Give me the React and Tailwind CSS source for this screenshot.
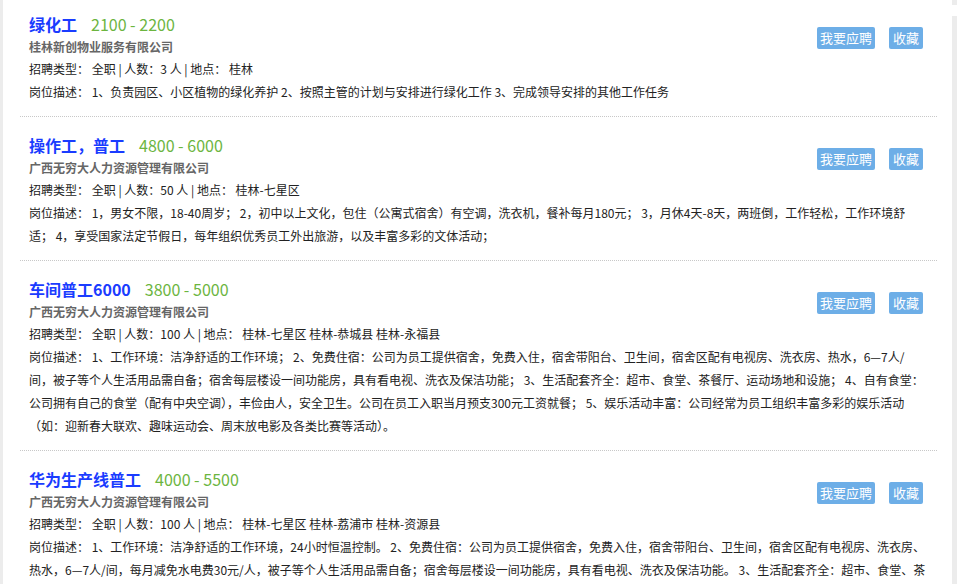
const JOBS = [
  {
    title: '绿化工',
    salary: '2100 - 2200',
    company: '桂林新创物业服务有限公司',
    info: '招聘类型： 全职 | 人数：3 人 | 地点： 桂林',
    desc: '岗位描述： 1、负责园区、小区植物的绿化养护 2、按照主管的计划与安排进行绿化工作 3、完成领导安排的其他工作任务',
  },
  {
    title: '操作工，普工',
    salary: '4800 - 6000',
    company: '广西无穷大人力资源管理有限公司',
    info: '招聘类型： 全职 | 人数：50 人 | 地点： 桂林-七星区',
    desc: '岗位描述： 1，男女不限，18-40周岁； 2，初中以上文化，包住（公寓式宿舍）有空调，洗衣机，餐补每月180元； 3，月休4天-8天，两班倒，工作轻松，工作环境舒适； 4，享受国家法定节假日，每年组织优秀员工外出旅游，以及丰富多彩的文体活动；',
  },
  {
    title: '车间普工6000',
    salary: '3800 - 5000',
    company: '广西无穷大人力资源管理有限公司',
    info: '招聘类型： 全职 | 人数：100 人 | 地点： 桂林-七星区 桂林-恭城县 桂林-永福县',
    desc: '岗位描述： 1、工作环境：洁净舒适的工作环境； 2、免费住宿：公司为员工提供宿舍，免费入住，宿舍带阳台、卫生间，宿舍区配有电视房、洗衣房、热水，6—7人/间，被子等个人生活用品需自备；宿舍每层楼设一间功能房，具有看电视、洗衣及保洁功能； 3、生活配套齐全：超市、食堂、茶餐厅、运动场地和设施； 4、自有食堂：公司拥有自己的食堂（配有中央空调），丰俭由人，安全卫生。公司在员工入职当月预支300元工资就餐； 5、娱乐活动丰富：公司经常为员工组织丰富多彩的娱乐活动（如：迎新春大联欢、趣味运动会、周末放电影及各类比赛等活动）。',
  },
  {
    title: '华为生产线普工',
    salary: '4000 - 5500',
    company: '广西无穷大人力资源管理有限公司',
    info: '招聘类型： 全职 | 人数：100 人 | 地点： 桂林-七星区 桂林-荔浦市 桂林-资源县',
    desc: '岗位描述： 1、工作环境：洁净舒适的工作环境，24小时恒温控制。 2、免费住宿：公司为员工提供宿舍，免费入住，宿舍带阳台、卫生间，宿舍区配有电视房、洗衣房、热水，6—7人/间，每月减免水电费30元/人，被子等个人生活用品需自备；宿舍每层楼设一间功能房，具有看电视、洗衣及保洁功能。 3、生活配套齐全：超市、食堂、茶餐厅、运动场地和设施； 4、自有食堂：公司拥有自己的食堂（配有中央空调），丰俭由人，安全卫生。',
  },
];

function JobItem({ job }) {
  return (
    <div className="relative border-b border-dotted border-[#c8c8c8] pl-[9px] pr-[11px] pt-[16px] pb-[13px]">
      <div className="flex items-center h-[24px] leading-[24px]">
        <a className="text-[16px] font-bold text-[#1a3cff]">{job.title}</a>
        <span className="ml-[14px] text-[16px] text-[#6cb53f]">{job.salary}</span>
      </div>
      <div className="text-[12px] leading-[22px] font-bold text-[#666]">{job.company}</div>
      <div className="text-[12px] leading-[22px] text-[#222]">{job.info}</div>
      <p className="text-[12px] leading-[23px] text-[#222]">{job.desc}</p>
      <div className="absolute right-[14px] top-[31px] flex gap-[14px]">
        <button className="h-[22px] w-[58px] rounded-[2px] bg-[#6daee7] text-[13px] leading-[22px] text-white">我要应聘</button>
        <button className="h-[22px] w-[34px] rounded-[2px] bg-[#6daee7] text-[13px] leading-[22px] text-white">收藏</button>
      </div>
    </div>
  );
}

export default function App() {
  return (
    <div className="relative h-[584px] w-[957px] overflow-hidden bg-white font-['Microsoft_YaHei','Noto_Sans_CJK_SC',sans-serif]">
      <div className="absolute left-0 top-0 h-full w-[3px] bg-[#ececec]" />
      <div className="absolute right-0 top-0 h-[5px] w-[5px] bg-[#ececec]" />
      <div className="absolute right-0 top-[16px] bottom-0 w-[5px] bg-[#ececec]" />
      <div className="ml-[20px] mr-[20px] -mt-[4px]">
        {JOBS.map((job) => (
          <JobItem key={job.title} job={job} />
        ))}
      </div>
    </div>
  );
}
